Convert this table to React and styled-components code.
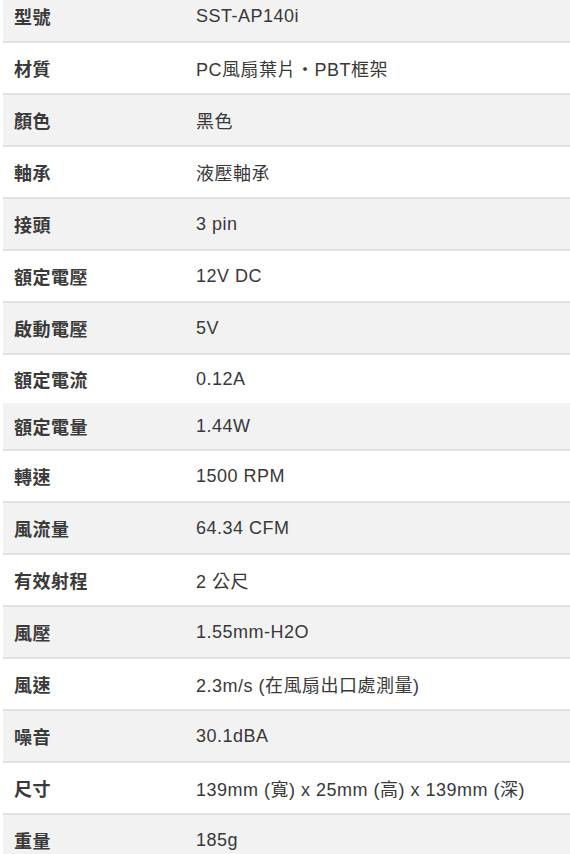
import React from 'react';
import styled, { createGlobalStyle } from 'styled-components';

const GlobalStyle = createGlobalStyle`
  html, body {
    margin: 0;
    padding: 0;
    background: #ffffff;
  }
  body {
    font-family: 'Liberation Sans', 'Noto Sans CJK TC', sans-serif;
    overflow: hidden;
  }
`;

const Table = styled.div`
  margin: -9px 0 0 3px;
  display: flex;
  flex-direction: column;
`;

const Row = styled.div`
  display: grid;
  grid-template-columns: 182px 1fr;
  align-items: center;
  height: ${(p) => (p.$tight ? 48 : 52)}px;
  box-sizing: border-box;
  background: ${(p) => (p.$shaded ? '#f2f2f2' : '#ffffff')};
  border-bottom: ${(p) => (p.$noBorder ? 'none' : '2px solid #e1e1e1')};
`;

const Label = styled.div`
  padding-left: 11px;
  font-size: 18px;
  font-weight: bold;
  letter-spacing: 0.5px;
  color: #3a3a3a;
`;

const Value = styled.div`
  padding-left: 11px;
  font-size: 18px;
  letter-spacing: 0.5px;
  color: #383838;
  white-space: nowrap;
`;

const specs = [
  ['型號', 'SST-AP140i'],
  ['材質', 'PC風扇葉片・PBT框架'],
  ['顏色', '黑色'],
  ['軸承', '液壓軸承'],
  ['接頭', '3 pin'],
  ['額定電壓', '12V DC'],
  ['啟動電壓', '5V'],
  ['額定電流', '0.12A', { tight: true, noBorder: true }],
  ['額定電量', '1.44W', { tight: true }],
  ['轉速', '1500 RPM'],
  ['風流量', '64.34 CFM'],
  ['有效射程', '2 公尺'],
  ['風壓', '1.55mm-H2O'],
  ['風速', '2.3m/s (在風扇出口處測量)'],
  ['噪音', '30.1dBA'],
  ['尺寸', '139mm (寬) x 25mm (高) x 139mm (深)'],
  ['重量', '185g'],
];

const App = () => {
  return (
    <>
      <GlobalStyle />
      <Table>
        {specs.map(([label, value, opts = {}], i) => (
          <Row key={label} $shaded={i % 2 === 0} $tight={opts.tight} $noBorder={opts.noBorder}>
            <Label>{label}</Label>
            <Value>{value}</Value>
          </Row>
        ))}
      </Table>
    </>
  );
};

export default App;
